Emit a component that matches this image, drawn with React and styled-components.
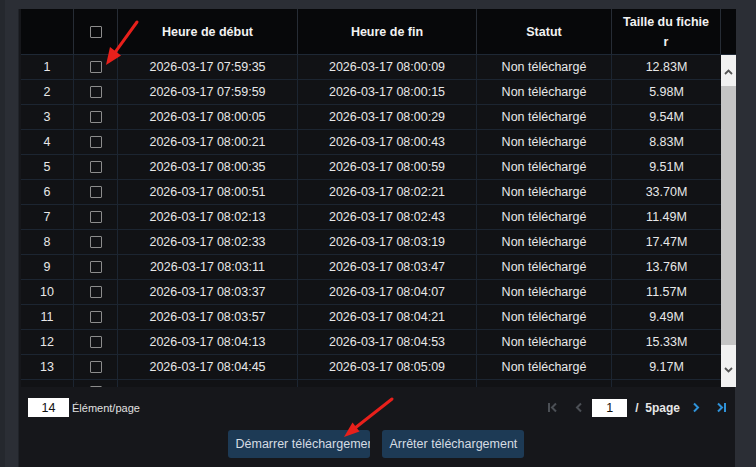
import React from "react";
import styled, { createGlobalStyle } from "styled-components";

const Global = createGlobalStyle`
  html, body { margin: 0; padding: 0; background: #2b2e34; }
  body { font-family: "Liberation Sans", Arial, sans-serif; font-size: 12.5px; }
  * { box-sizing: border-box; }
`;

const COLS = "53px 44px 180px 179px 135px 109px";

const Page = styled.div`
  position: relative;
  width: 756px;
  height: 467px;
  overflow: hidden;
  padding: 9px 21px 0 18px;
  background: linear-gradient(to right, #25282e 0 5px, #2b2e35 5px);
`;

const Panel = styled.div`
  height: 458px;
  background: #16171b;
  padding-left: 2px;
  border-left: 1px solid #202329;
  display: flex;
  flex-direction: column;
`;

const Table = styled.div`
  width: 715px;
  display: flex;
  flex-direction: column;
`;

const HeadRow = styled.div`
  display: grid;
  grid-template-columns: ${COLS} 15px;
  height: 46px;
  background: #07080a;
  border-bottom: 1px solid #1e2835;
`;

const HeadCell = styled.div`
  display: flex;
  align-items: center;
  justify-content: center;
  text-align: center;
  color: #f2f2f2;
  font-weight: bold;
  font-size: 12.5px;
  line-height: 20px;
  border-right: ${(p) => (p.$last ? "none" : "1px solid #262c35")};
`;

const Wrap = styled.span`
  display: block;
  width: 89px;
  word-break: break-all;
`;

const BodyArea = styled.div`
  display: flex;
  height: 332px;
`;

const Rows = styled.div`
  width: 700px;
  height: 332px;
  overflow: hidden;
`;

const Row = styled.div`
  display: grid;
  grid-template-columns: ${COLS};
  height: 25px;
  background: #111215;
  border-bottom: 1px solid #1c2531;
`;

const Cell = styled.div`
  display: flex;
  align-items: center;
  justify-content: center;
  color: #e8e8e8;
  font-size: 12.5px;
  white-space: nowrap;
  border-right: 1px solid #1c2531;
  &:last-child { border-right: none; }
`;

const Check = styled.span`
  display: inline-block;
  width: 12px;
  height: 12px;
  border: 1px solid #8c8c8c;
  border-radius: 1px;
  background: transparent;
`;

const Scrollbar = styled.div`
  width: 15px;
  height: 332px;
  background: #f1f1f1;
  display: flex;
  flex-direction: column;
`;

const ScrollBtn = styled.div`
  height: ${(p) => p.$h}px;
  display: flex;
  justify-content: center;
  padding-top: ${(p) => p.$pt}px;
`;

const Thumb = styled.div`
  height: 259px;
  background: #c4c4c4;
`;

const Footer = styled.div`
  display: flex;
  flex-direction: column;
  padding: 11px 8px 0 7px;
`;

const Pager = styled.div`
  display: flex;
  align-items: center;
  height: 19px;
`;

const Box = styled.div`
  width: ${(p) => p.$w}px;
  height: ${(p) => p.$h}px;
  background: #ffffff;
  color: #111;
  font-size: 12.5px;
  display: flex;
  align-items: center;
  justify-content: center;
`;

const Label = styled.span`
  color: #e0e0e0;
  font-size: 11px;
  margin-left: 3px;
`;

const Spacer = styled.div`
  flex: 1;
`;

const NavIcon = styled.span`
  display: inline-flex;
  width: ${(p) => p.$w}px;
  justify-content: center;
  margin-right: ${(p) => p.$mr || 0}px;
  color: ${(p) => (p.$active ? "#2f92d8" : "#4b4f55")};
`;

const PageText = styled.span`
  color: #e6e6e6;
  font-weight: bold;
  font-size: 12px;
  margin: 0 11px 0 8px;
  white-space: pre;
`;

const Buttons = styled.div`
  display: flex;
  justify-content: center;
  gap: 12px;
  margin-top: 13px;
  padding-right: 4px;
`;

const Button = styled.div`
  width: 142px;
  height: 28px;
  background: #1d3a55;
  color: #d6dce3;
  font-size: 12.5px;
  border-radius: 3px;
  padding: 0 8px;
  display: flex;
  align-items: center;
  white-space: nowrap;
  overflow: hidden;
`;

const Overlay = styled.svg`
  position: absolute;
  left: 0;
  top: 0;
  pointer-events: none;
`;

const rows = [
  ["07:59:35", "08:00:09", "12.83M"],
  ["07:59:59", "08:00:15", "5.98M"],
  ["08:00:05", "08:00:29", "9.54M"],
  ["08:00:21", "08:00:43", "8.83M"],
  ["08:00:35", "08:00:59", "9.51M"],
  ["08:00:51", "08:02:21", "33.70M"],
  ["08:02:13", "08:02:43", "11.49M"],
  ["08:02:33", "08:03:19", "17.47M"],
  ["08:03:11", "08:03:47", "13.76M"],
  ["08:03:37", "08:04:07", "11.57M"],
  ["08:03:57", "08:04:21", "9.49M"],
  ["08:04:13", "08:04:53", "15.33M"],
  ["08:04:45", "08:05:09", "9.17M"],
];

const Chevron = ({ dir }) => (
  <svg width="9" height="6" viewBox="0 0 9 6">
    <path
      d={dir === "up" ? "M1 5 L4.5 1.5 L8 5" : "M1 1 L4.5 4.5 L8 1"}
      fill="none"
      stroke="#555"
      strokeWidth="1.8"
    />
  </svg>
);

const Nav = ({ kind }) => {
  const paths = {
    first: (
      <>
        <path d="M2 1 V10" />
        <path d="M9 1.5 L5 5.5 L9 9.5" />
      </>
    ),
    prev: <path d="M7 1.5 L3 5.5 L7 9.5" />,
    next: <path d="M3 1.5 L7 5.5 L3 9.5" />,
    last: (
      <>
        <path d="M2 1.5 L6 5.5 L2 9.5" />
        <path d="M9 1 V10" />
      </>
    ),
  };
  return (
    <svg width="11" height="11" viewBox="0 0 11 11" fill="none" stroke="currentColor" strokeWidth="2">
      {paths[kind]}
    </svg>
  );
};

export default function App() {
  return (
    <>
      <Global />
      <Page>
        <Panel>
          <Table>
            <HeadRow>
              <HeadCell />
              <HeadCell>
                <Check />
              </HeadCell>
              <HeadCell>Heure de début</HeadCell>
              <HeadCell>Heure de fin</HeadCell>
              <HeadCell>Statut</HeadCell>
              <HeadCell>
                <Wrap>Taille du fichier</Wrap>
              </HeadCell>
              <HeadCell $last />
            </HeadRow>
            <BodyArea>
              <Rows>
                {rows.map((r, i) => (
                  <Row key={i}>
                    <Cell>{i + 1}</Cell>
                    <Cell>
                      <Check />
                    </Cell>
                    <Cell>2026-03-17 {r[0]}</Cell>
                    <Cell>2026-03-17 {r[1]}</Cell>
                    <Cell>Non téléchargé</Cell>
                    <Cell>{r[2]}</Cell>
                  </Row>
                ))}
                <Row>
                  <Cell />
                  <Cell>
                    <Check />
                  </Cell>
                  <Cell />
                  <Cell />
                  <Cell />
                  <Cell />
                </Row>
              </Rows>
              <Scrollbar>
                <ScrollBtn $h={31} $pt={14}>
                  <Chevron dir="up" />
                </ScrollBtn>
                <Thumb />
                <ScrollBtn $h={42} $pt={22}>
                  <Chevron dir="down" />
                </ScrollBtn>
              </Scrollbar>
            </BodyArea>
          </Table>
          <Footer>
            <Pager>
              <Box $w={41} $h={19}>14</Box>
              <Label>Élément/page</Label>
              <Spacer />
              <NavIcon $w={11} $mr={16}>
                <Nav kind="first" />
              </NavIcon>
              <NavIcon $w={11} $mr={7}>
                <Nav kind="prev" />
              </NavIcon>
              <Box $w={35} $h={18}>1</Box>
              <PageText>/  5page</PageText>
              <NavIcon $w={11} $mr={14} $active>
                <Nav kind="next" />
              </NavIcon>
              <NavIcon $w={11} $active>
                <Nav kind="last" />
              </NavIcon>
            </Pager>
            <Buttons>
              <Button>Démarrer téléchargement</Button>
              <Button>Arrêter téléchargement</Button>
            </Buttons>
          </Footer>
        </Panel>
        <Overlay width="756" height="467" viewBox="0 0 756 467">
          <g stroke="#e8201b" strokeWidth="3" strokeLinecap="round" fill="#e8201b">
            <line x1="137" y1="22" x2="115.4" y2="51.8" />
            <polygon points="106,65 121,55.4 110,47" stroke="none" />
            <line x1="392" y1="399" x2="356" y2="427.3" />
            <polygon points="344,437 359.5,431.5 352.5,422.5" stroke="none" />
          </g>
        </Overlay>
      </Page>
    </>
  );
}
